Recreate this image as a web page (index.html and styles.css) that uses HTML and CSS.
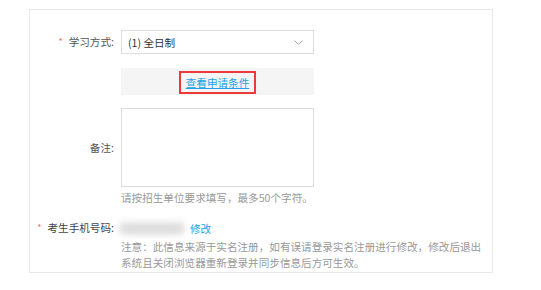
FILE: index.html
```html
<!DOCTYPE html>
<html lang="zh-CN">
<head>
<meta charset="UTF-8" />
<meta name="viewport" content="width=device-width, initial-scale=1" />
<title>报考信息</title>
<link rel="stylesheet" href="styles.css">
</head>
<body>

<div class="form-box">
  <div class="form-row">
    <label class="form-label"><span class="req">*</span>学习方式:</label>
    <div class="select-box">
      <span>(1) 全日制</span>
      <svg class="arrow" width="9" height="5" viewBox="0 0 9 5"><polyline points="0.5,0.5 4.5,4.5 8.5,0.5" fill="none" stroke="#a8a8a8" stroke-width="1" /></svg>
    </div>
  </div>

  <div class="form-row cond-row">
    <span class="form-label"></span>
    <div class="cond-box"><a href="#" class="cond-link">查看申请条件</a></div>
  </div>

  <div class="form-row note-row">
    <label class="form-label">备注:</label>
    <textarea class="remark"></textarea>
  </div>
  <p class="hint">请按招生单位要求填写，最多50个字符。</p>

  <div class="form-row phone-row">
    <label class="form-label dark"><span class="req">*</span>考生手机号码:</label>
    <span class="phone-mask"></span>
    <a href="#" class="edit-link">修改</a>
  </div>
  <p class="hint notice">注意：此信息来源于实名注册，如有误请登录实名注册进行修改，修改后退出系统且关闭浏览器重新登录并同步信息后方可生效。</p>
</div>

</body>
</html>
```

FILE: styles.css
```css
body {
  margin: 0;
  font-family: "Noto Sans CJK SC", sans-serif;
  font-size: 10.6px;
  color: #555;
  background-color: #fff;
}

.form-box {
  box-sizing: border-box;
  margin: 9px 0 0 29px;
  width: 464px;
  height: 264px;
  padding-top: 20px;
  border: 1px solid #e8e8e8;
}

.form-row {
  display: flex;
  align-items: center;
}

.form-label {
  box-sizing: border-box;
  flex: none;
  width: 91px;
  padding-right: 7px;
  text-align: right;
  line-height: 17px;
}

.form-label.dark { color: #444; }

.req {
  color: #f2725e;
  font-size: 9px;
  margin-right: 6px;
  position: relative;
  top: -1px;
}

.select-box {
  box-sizing: border-box;
  display: flex;
  align-items: center;
  justify-content: space-between;
  width: 193px;
  height: 24px;
  padding: 0 10px 0 6px;
  border: 1px solid #dcdcdc;
  color: #333;
}

.cond-row { margin-top: 14px; }

.cond-box {
  box-sizing: border-box;
  width: 193px;
  height: 27px;
  padding-top: 3px;
  background-color: #f5f5f5;
  text-align: center;
}

.cond-link {
  display: inline-block;
  padding: 3px 5px;
  line-height: 13px;
  border: 2px solid #ea3b3b;
  color: #22a0ea;
  text-decoration: underline;
}

.note-row { margin-top: 13px; }

.remark {
  box-sizing: border-box;
  display: block;
  width: 193px;
  height: 79px;
  margin: 0;
  border: 1px solid #dcdcdc;
  resize: none;
}

.hint {
  margin: 2px 0 0 91px;
  line-height: 17px;
  color: #999;
}

.phone-row { margin-top: 13px; }

.phone-mask {
  display: inline-block;
  width: 66px;
  height: 13px;
  margin: 0 5px 0 -2px;
  border-radius: 7px;
  background-color: #dedede;
  filter: blur(3px);
}

.edit-link {
  color: #22a0ea;
  text-decoration: none;
  line-height: 17px;
}

.notice {
  width: 366px;
  margin-top: 2px;
  line-height: 16px;
}
```
